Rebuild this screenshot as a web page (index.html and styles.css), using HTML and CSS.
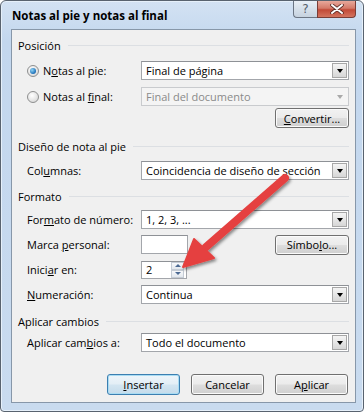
FILE: index.html
```html
<!DOCTYPE html>
<html lang="es">
<head>
  <meta charset="UTF-8">
  <title>Notas al pie y notas al final</title>
  <link rel="stylesheet" href="styles.css">
</head>
<body>
  <div class="window">
    <div class="titlebar">
      <span class="title">Notas al pie y notas al final</span>
      <div class="caption-btns">
        <span class="cap help">?</span>
        <span class="cap close">
          <svg width="14" height="10" viewBox="0 0 14 10">
            <path d="M2 1 L12 9 M12 1 L2 9" stroke="#5a2a24" stroke-width="3.6" stroke-linecap="round"/>
            <path d="M2 1 L12 9 M12 1 L2 9" stroke="#fff" stroke-width="2" stroke-linecap="round"/>
          </svg>
        </span>
      </div>
    </div>

    <div class="client">
      <div class="group-title"><span>Posición</span></div>
      <div class="row first">
        <label class="lbl"><span class="radio checked"></span><span>N<u>o</u>tas al pie:</span></label>
        <div class="combo"><span class="value">Final de página</span><span class="drop"></span></div>
      </div>
      <div class="row r2">
        <label class="lbl"><span class="radio"></span><span>Notas al <u>f</u>inal:</span></label>
        <div class="combo disabled"><span class="value">Final del documento</span><span class="drop"></span></div>
      </div>
      <div class="row btn-row">
        <button class="btn"><u>C</u>onvertir...</button>
      </div>

      <div class="group-title g2"><span>Diseño de nota al pie</span></div>
      <div class="row r-col">
        <label class="lbl"><span>Col<u>u</u>mnas:</span></label>
        <div class="combo"><span class="value">Coincidencia de diseño de sección</span><span class="drop"></span></div>
      </div>

      <div class="group-title g3"><span>Formato</span></div>
      <div class="row r-fmt">
        <label class="lbl"><span>For<u>m</u>ato de número:</span></label>
        <div class="combo"><span class="value">1, 2, 3, ...</span><span class="drop"></span></div>
      </div>
      <div class="row r-next">
        <label class="lbl"><span>Marca <u>p</u>ersonal:</span></label>
        <div class="textbox"></div>
        <button class="btn push-right"><span>Símbo<u>l</u>o...</span></button>
      </div>
      <div class="row r-next">
        <label class="lbl"><span>Inici<u>a</u>r en:</span></label>
        <div class="textbox spin">
          <span class="value">2</span>
          <div class="spinner">
            <span class="sp up"></span>
            <span class="sp down"></span>
          </div>
        </div>
      </div>
      <div class="row r-next">
        <label class="lbl"><span><u>N</u>umeración:</span></label>
        <div class="combo"><span class="value">Continua</span><span class="drop"></span></div>
      </div>

      <div class="group-title g4"><span>Aplicar cambios</span></div>
      <div class="row r-apply">
        <label class="lbl"><span>Aplicar cam<u>b</u>ios a:</span></label>
        <div class="combo"><span class="value">Todo el documento</span><span class="drop"></span></div>
      </div>

      <div class="actions">
        <button class="btn default"><u>I</u>nsertar</button>
        <button class="btn">Cancelar</button>
        <button class="btn">A<u>p</u>licar</button>
      </div>
    </div>

    <!-- flecha roja encima del diálogo -->
    <svg class="arrow" width="364" height="414" viewBox="0 0 364 414">
      <defs>
        <filter id="sh" x="-20%" y="-20%" width="140%" height="140%">
          <feDropShadow dx="1.5" dy="2" stdDeviation="1.5" flood-color="#000" flood-opacity="0.45"/>
        </filter>
      </defs>
      <g filter="url(#sh)">
        <line x1="285" y1="178" x2="206" y2="247" stroke="#e5403f" stroke-width="8" stroke-linecap="round"/>
        <polygon points="183,267 194,239 214,258" fill="#e5403f" stroke="#e5403f" stroke-width="2" stroke-linejoin="round"/>
      </g>
    </svg>
  </div>
</body>
</html>
```

FILE: styles.css
```css
body {
  margin: 0;
  background: #fff;
  font-family: "Open Sans", sans-serif;
  font-size: 11px;
  color: #000;
}
.window {
  position: relative;
  box-sizing: border-box;
  width: 364px;
  height: 412px;
  border: 1px solid #59636f;
  border-radius: 6px 6px 4px 4px;
  background: linear-gradient(#d3e2f3, #c3d7ee 40px, #c9dbef);
  box-shadow: inset 0 0 0 1px #e6f0fa;
}
.titlebar {
  height: 28px;
  display: flex;
  align-items: flex-start;
}
.title {
  padding: 7px 0 0 11px;
  font-weight: bold;
  font-size: 11.5px;
}
.caption-btns {
  margin-left: auto;
  margin-right: 7px;
  display: flex;
}
.cap {
  height: 17px;
  box-sizing: border-box;
  display: flex;
  align-items: center;
  justify-content: center;
  border: 1px solid #6b7583;
  border-top: none;
}
.help {
  width: 24px;
  border-radius: 0 0 0 4px;
  border-right: none;
  background: linear-gradient(#e9eff6, #d6e0ea 50%, #c6d2df);
  color: #56606b;
  font-family: "DejaVu Sans", sans-serif;
  font-size: 12px;
}
.close {
  width: 39px;
  border-radius: 0 0 4px 0;
  border-color: #7a3d36;
  background: linear-gradient(#e8a89b, #d47a69 45%, #c24a38 55%, #d3745f);
}
.client {
  box-sizing: border-box;
  margin-left: 10px;
  width: 345px;
  height: 374px;
  border: 1px solid #8797a9;
  background: #f0f0f0;
  padding: 7px 6px 0 6px;
}
.group-title {
  display: flex;
  align-items: center;
  height: 16px;
}
.group-title::after {
  content: "";
  flex: 1;
  height: 1px;
  margin-left: 7px;
  background: #dcdfe3;
}
.g2 { margin-top: 10px; }
.g3 { margin-top: 8px; }
.g4 { margin-top: 9px; }
.row {
  display: flex;
  align-items: center;
  height: 19px;
  margin-left: 9px;
}
.row.first { margin-top: 8px; }
.row.r2 { margin-top: 7px; }
.row.btn-row { margin-top: 2px; height: 20px; justify-content: flex-end; }
.row.r-col { margin-top: 7px; }
.row.r-fmt { margin-top: 6px; }
.row.r-next { margin-top: 6px; }
.row.r-apply { margin-top: 4px; }
.lbl {
  width: 114px;
  display: flex;
  align-items: center;
  white-space: nowrap;
}
.radio {
  box-sizing: border-box;
  width: 12px;
  height: 12px;
  margin-right: 4px;
  border-radius: 50%;
  border: 1px solid #8e8f8f;
  background: radial-gradient(circle at 40% 35%, #ffffff, #e3e3e3 60%, #cfcfcf);
  position: relative;
}
.radio.checked::after {
  content: "";
  position: absolute;
  left: 2px;
  top: 2px;
  width: 6px;
  height: 6px;
  border-radius: 50%;
  background: radial-gradient(circle at 35% 35%, #8fd4f5, #1d6fb8 70%, #1a4f8a);
}
.combo {
  box-sizing: border-box;
  width: 208px;
  height: 19px;
  border: 1px solid #a3a6ab;
  border-top-color: #8e9196;
  background: #fff;
  display: flex;
  align-items: center;
}
.combo .value {
  flex: 1;
  padding-left: 4px;
  white-space: nowrap;
}
.drop {
  box-sizing: border-box;
  width: 15px;
  height: 15px;
  margin-right: 1px;
  border: 1px solid #a7a7a7;
  background: linear-gradient(#f4f4f4, #e6e6e6 50%, #d6d6d6);
  display: flex;
  align-items: center;
  justify-content: center;
}
.drop::after {
  content: "";
  border-left: 3.5px solid transparent;
  border-right: 3.5px solid transparent;
  border-top: 4px solid #000;
}
.combo.disabled {
  background: #f4f4f4;
  border-color: #c9cbce;
  color: #8a8a8a;
}
.combo.disabled .drop {
  border-color: transparent;
  background: none;
}
.combo.disabled .drop::after {
  border-top-color: #a9a9a9;
}
.textbox {
  box-sizing: border-box;
  width: 47px;
  height: 19px;
  border: 1px solid #a3a6ab;
  border-top-color: #8e9196;
  background: #fff;
}
.textbox.spin {
  width: 46px;
  height: 18px;
  display: flex;
  align-items: center;
}
.textbox.spin .value {
  flex: 1;
  padding-left: 4px;
}
.spinner {
  display: flex;
  flex-direction: column;
  width: 13px;
  margin-right: 2px;
}
.sp {
  box-sizing: border-box;
  height: 8px;
  border: 1px solid #c5ccd5;
  background: linear-gradient(#f8f9fb, #e3e8ee);
  display: flex;
  align-items: center;
  justify-content: center;
}
.sp.up::after {
  content: "";
  border-left: 3px solid transparent;
  border-right: 3px solid transparent;
  border-bottom: 3px solid #4c6a93;
}
.sp.down::after {
  content: "";
  border-left: 3px solid transparent;
  border-right: 3px solid transparent;
  border-top: 3px solid #4c6a93;
}
.btn {
  box-sizing: border-box;
  width: 74px;
  height: 20px;
  padding: 0;
  font: inherit;
  color: #000;
  border: 1px solid #707070;
  border-radius: 3px;
  background: linear-gradient(#f2f2f2, #ebebeb 48%, #dddddd 52%, #cfcfcf);
  box-shadow: inset 0 0 0 1px #fbfbfb;
}
.push-right { margin-left: auto; }
.actions {
  display: flex;
  justify-content: flex-end;
  gap: 11px;
  margin-top: 22px;
  margin-right: 1px;
}
.actions .btn {
  width: 73px;
  height: 21px;
}
.btn.default {
  border-color: #3c7fb1;
  box-shadow: inset 0 0 0 1px #a9dcf3;
  background: linear-gradient(#eef5fa, #e3eef6 48%, #d3e5f1 52%, #c4dbeb);
}
.arrow {
  position: absolute;
  left: -1px;
  top: -1px;
  pointer-events: none;
}
```
